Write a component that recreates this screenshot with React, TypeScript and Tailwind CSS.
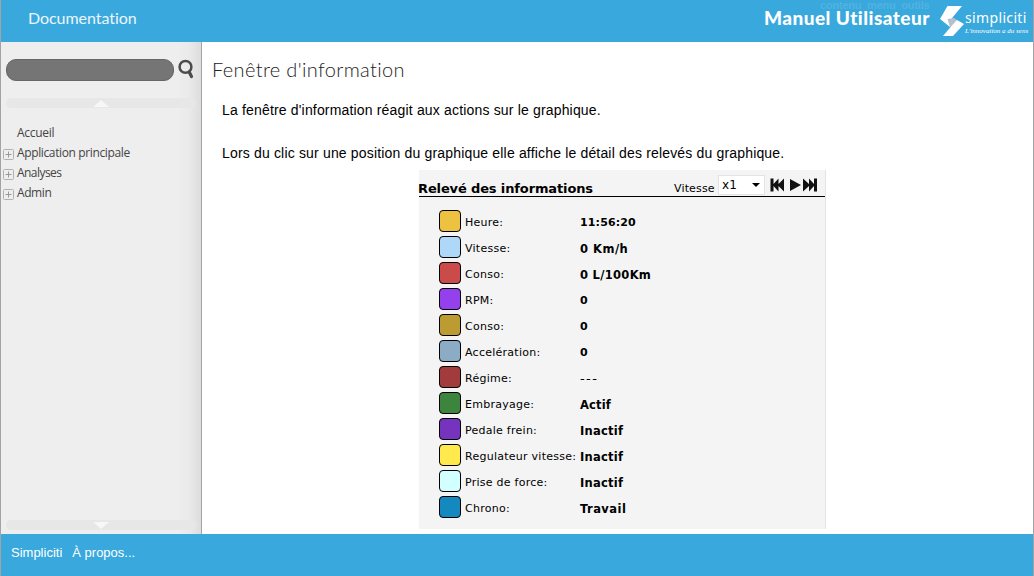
import React from "react";

type Reading = { label: string; value: string; swatch: string; text: string };

const readings: Reading[] = [
  { label: "Heure:", value: "11:56:20", swatch: "bg-[#edc240]", text: "font-bold tracking-[0.15px]" },
  { label: "Vitesse:", value: "0 Km/h", swatch: "bg-[#afd8f8]", text: "text-[11.5px] font-bold tracking-[0.5px]" },
  { label: "Conso:", value: "0 L/100Km", swatch: "bg-[#cb4b4b]", text: "text-[11.5px] font-bold tracking-[0.3px]" },
  { label: "RPM:", value: "0", swatch: "bg-[#9440ed]", text: "font-bold" },
  { label: "Conso:", value: "0", swatch: "bg-[#bd9b33]", text: "font-bold" },
  { label: "Accelération:", value: "0", swatch: "bg-[#8cacc6]", text: "font-bold" },
  { label: "Régime:", value: "---", swatch: "bg-[#a23c3c]", text: "text-[13px] tracking-[1.4px]" },
  { label: "Embrayage:", value: "Actif", swatch: "bg-[#3d853d]", text: "text-[11.5px] font-bold" },
  { label: "Pedale frein:", value: "Inactif", swatch: "bg-[#7633bd]", text: "text-[11.5px] font-bold tracking-[0.25px]" },
  { label: "Regulateur vitesse:", value: "Inactif", swatch: "bg-[#ffe94d]", text: "text-[11.5px] font-bold tracking-[0.25px]" },
  { label: "Prise de force:", value: "Inactif", swatch: "bg-[#d2ffff]", text: "text-[11.5px] font-bold tracking-[0.25px]" },
  { label: "Chrono:", value: "Travail", swatch: "bg-[#1489c0]", text: "text-[11.5px] font-bold tracking-[0.45px]" },
];

const menu = [
  { label: "Accueil", expandable: false, width: "tracking-[-0.3px]" },
  { label: "Application principale", expandable: true, width: "tracking-[-0.37px]" },
  { label: "Analyses", expandable: true, width: "tracking-[-0.55px]" },
  { label: "Admin", expandable: true, width: "tracking-[-0.42px]" },
];

function Logo() {
  return (
    <div className="flex h-[34px] w-[89px] items-start">
      <svg width="25" height="31" viewBox="0 0 25 31" className="shrink-0">
        <path d="M7.500 0H22L12.500 11.500L10 21L0 13Z" fill="#fff" />
        <path d="M7.500 13L14 12L18.500 15.500L10 21Z" fill="#b5c0cc" />
        <path d="M17 14L24 18L13 30H3L11 20.500Z" fill="#fff" />
      </svg>
      <div className="whitespace-nowrap pt-[4px] text-white">
        <div className="font-['Noto_Sans',sans-serif] text-[14px] leading-[16px] tracking-[0.35px]">simpliciti</div>
        <div className="mt-px font-['Liberation_Serif',serif] text-[7px] italic leading-[8px]">L'innovation a du sens</div>
      </div>
    </div>
  );
}

function Strip({ down = false }: { down?: boolean }) {
  return (
    <div className="flex h-[10px] w-[190px] items-center justify-center rounded-full bg-[#e7e7e7]">
      <svg width="16" height="7" viewBox="0 0 16 7">
        <path d={down ? "M0 0H16L8 7Z" : "M0 7H16L8 0Z"} fill="#fff" fillOpacity="0.65" />
      </svg>
    </div>
  );
}

function Transport() {
  return (
    <svg width="48" height="14" viewBox="0 0 48 14" fill="#111">
      <path d="M0.500 0.500H3.500V6L8.500 0.500V6L14 0.500V13.500L8.500 8V13.500L3.500 8V13.500H0.500Z" />
      <path d="M20 1L31 7L20 13Z" />
      <path d="M33 0.500L39 6V0.500L44 6V0.500H47V13.500H44V8L39 13.500V8L33 13.500Z" />
    </svg>
  );
}

function Sidebar() {
  return (
    <aside className="flex h-[492px] w-[201px] shrink-0 flex-col border-r border-[#a3a3a3] bg-[linear-gradient(to_right,#eeeeee_88%,#eaeaea_94%,#dddddd_100%)] pl-[5px]">
      <div className="flex pt-[17px]">
        <div className="h-[22px] w-[168px] rounded-[10px] border border-[#666] bg-[#757575]" />
        <svg width="18" height="21" viewBox="0 0 18 21" className="ml-[4px]" fill="none" stroke="#4c4c4c">
          <circle cx="7.500" cy="7.900" r="5.900" strokeWidth="2.500" />
          <path d="M11.200 13L13.500 17.500" strokeWidth="3.200" strokeLinecap="round" />
        </svg>
      </div>
      <div className="mt-[17px]"><Strip /></div>
      <ul className="-ml-[3px] mt-[15px] font-['Open_Sans',sans-serif] text-[12px] leading-[20px] text-[#444]">
        {menu.map((item) => (
          <li key={item.label} className="flex h-[20px] items-start">
            <span className="flex w-[14px] shrink-0 pt-[6px]">
              {item.expandable && (
                <svg width="11" height="11" viewBox="0 0 11 11" fill="none" stroke="#b0b0b0">
                  <rect x=".5" y=".5" width="10" height="10" rx="1" />
                  <path d="M5.5 2.5V8.5M2.5 5.5H8.5" stroke="#999" />
                </svg>
              )}
            </span>
            <span className={item.width}>{item.label}</span>
          </li>
        ))}
      </ul>
      <div className="mb-[4px] mt-auto"><Strip down /></div>
    </aside>
  );
}

function InfoPanel() {
  return (
    <section className="ml-[217px] mt-[7px] h-[359px] w-[407px] border-r border-[#e4e4e4] bg-[#f4f4f4] font-['DejaVu_Sans',sans-serif] text-black">
      <div className="flex h-[27px] border-b border-black">
        <h2 className="-ml-px w-[256px] whitespace-nowrap pt-[10px] text-[13px] font-bold leading-[18px] tracking-[-0.13px]">Relevé des informations</h2>
        <span className="w-[44px] pt-[11px] text-[11px] leading-[16px] tracking-[0.15px]">Vitesse</span>
        <div className="mt-[5px] flex h-[20px] w-[47px] items-center justify-between border border-[#e2e3e7] bg-white pl-[3px] pr-[4px] text-[12px]">
          <span>x1</span>
          <svg width="8" height="4" viewBox="0 0 8 4"><path d="M0 0H8L4 4Z" /></svg>
        </div>
        <div className="ml-[5px] pt-[8px]"><Transport /></div>
      </div>
      <div className="pl-[20px] pt-[13px]">
        {readings.map((r, i) => (
          <div key={i} className="flex h-[26px] whitespace-nowrap text-[11px] leading-[26px]">
            <span className={"h-[22px] w-[22px] shrink-0 rounded-[4px] border border-black " + r.swatch} />
            <span className="ml-[4px] w-[115px] shrink-0 tracking-[0.26px]">{r.label}</span>
            <span className={r.text}>{r.value}</span>
          </div>
        ))}
      </div>
    </section>
  );
}

export default function App() {
  return (
    <div className="flex h-[576px] w-[1034px] flex-col overflow-hidden border-x border-[#a3a3a3] bg-white">
      <header className="relative flex h-[42px] shrink-0 bg-[#39a8dd] text-white">
        <span className="ml-[27px] flex-1 pt-[8px] font-['Lato',sans-serif] text-[16px] leading-[20px] tracking-[-0.05px] text-white/90">Documentation</span>
        <span className="absolute left-[819px] top-[-2px] whitespace-pre font-['Liberation_Sans',sans-serif] text-[11px] font-bold leading-[14px] tracking-[-0.2px] text-[#50b3e1]">contenu  menu  outils</span>
        <h1 className="relative mr-[11px] w-[165px] whitespace-nowrap pt-[6px] font-['Lato',sans-serif] text-[19px] font-black leading-[24px] tracking-[0.45px]">Manuel Utilisateur</h1>
        <div className="mr-[4px] pt-[6px]"><Logo /></div>
      </header>
      <main className="flex h-[492px]">
        <Sidebar />
        <article className="min-w-0 flex-1 font-['Liberation_Sans',sans-serif] text-[14px] leading-[20px] tracking-[0.17px] text-black">
          <h2 className="ml-[10px] pt-[15px] font-['Lato',sans-serif] text-[20px] font-light leading-[24px] tracking-[0.35px] text-[#222]">Fenêtre d'information</h2>
          <p className="ml-[20px] mt-[19px]">La fenêtre d'information réagit aux actions sur le graphique.</p>
          <p className="ml-[20px] mt-[23px]">Lors du clic sur une position du graphique elle affiche le détail des relevés du graphique.</p>
          <InfoPanel />
        </article>
      </main>
      <footer className="flex h-[42px] gap-[10px] bg-[#39a8dd] pl-[10px] pt-[10px] font-['Liberation_Sans',sans-serif] text-[13px] leading-[17px] text-white">
        <span>Simpliciti</span>
        <span>À propos...</span>
      </footer>
    </div>
  );
}
